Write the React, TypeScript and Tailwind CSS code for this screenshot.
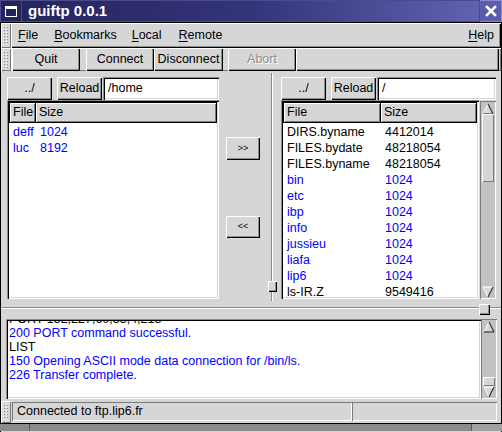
import React from "react";

const raised =
  "shadow-[inset_1px_1px_0_#ffffff,inset_-1px_-1px_0_#000000,inset_-2px_-2px_0_#8e8e8e]";
const raisedThin = "shadow-[inset_1px_1px_0_#ffffff,inset_-1px_-1px_0_#7a7a7a]";
const sunken =
  "shadow-[inset_1px_1px_0_#8e8e8e,inset_2px_2px_0_#000000,inset_-1px_-1px_0_#ffffff,inset_-2px_-2px_0_#d6d6d6]";
const sunkenThin = "shadow-[inset_1px_1px_0_#7a7a7a,inset_-1px_-1px_0_#ffffff]";

function Grip({ h }: { h: number }) {
  return (
    <div className={`w-[10px] shrink-0 ${raisedThin} flex items-stretch justify-center py-[3px]`} style={{ height: h }}>
      <svg width="6" height={h - 6}>
        <defs>
          <pattern id={`g${h}`} width="3" height="3" patternUnits="userSpaceOnUse">
            <rect x="0" y="0" width="1" height="1" fill="#ffffff" />
            <rect x="1" y="1" width="1" height="1" fill="#8a8a8a" />
          </pattern>
        </defs>
        <rect width="6" height={h - 6} fill={`url(#g${h})`} />
      </svg>
    </div>
  );
}

function Btn({ children, w, h, className = "" }: { children: React.ReactNode; w: number; h: number; className?: string }) {
  return (
    <div
      className={`flex items-center justify-center shrink-0 text-[12.5px] text-black ${raised} ${className}`}
      style={{ width: w, height: h }}
    >
      {children}
    </div>
  );
}

function Arrow({ up }: { up: boolean }) {
  return (
    <svg width="12" height="12" viewBox="0 0 12 12">
      {up ? (
        <>
          <polygon points="6,1 11,11 1,11" fill="#d6d6d6" />
          <line x1="6" y1="1" x2="1" y2="11" stroke="#ffffff" strokeWidth="1" />
          <line x1="6" y1="1" x2="11" y2="11" stroke="#3a3a3a" strokeWidth="1.2" />
          <line x1="1" y1="11" x2="11" y2="11" stroke="#3a3a3a" strokeWidth="1.2" />
        </>
      ) : (
        <>
          <polygon points="1,1 11,1 6,11" fill="#d6d6d6" />
          <line x1="1" y1="1" x2="11" y2="1" stroke="#ffffff" strokeWidth="1.2" />
          <line x1="1" y1="1" x2="6" y2="11" stroke="#ffffff" strokeWidth="1" />
          <line x1="11" y1="1" x2="6" y2="11" stroke="#3a3a3a" strokeWidth="1.2" />
        </>
      )}
    </svg>
  );
}

function ScrollBar({ h, thumbTop, thumbH }: { h: number; thumbTop: number; thumbH: number }) {
  return (
    <div className={`relative w-[16px] shrink-0 bg-[#c2c2c2] ${sunkenThin}`} style={{ height: h }}>
      <div className="absolute left-[2px] top-[1px] w-[12px] h-[13px] flex items-center justify-center">
        <Arrow up />
      </div>
      <div
        className={`absolute left-[2px] w-[12px] bg-[#d6d6d6] ${raisedThin}`}
        style={{ top: thumbTop, height: thumbH }}
      />
      <div className="absolute left-[2px] bottom-[1px] w-[12px] h-[13px] flex items-center justify-center">
        <Arrow up={false} />
      </div>
    </div>
  );
}

type Row = { a: string; b: string; blue: boolean };

function FileList({ rows, w, h, c1 }: { rows: Row[]; w: number; h: number; c1: number }) {
  return (
    <div className={`bg-white shrink-0 p-[2px] ${sunken} overflow-hidden`} style={{ width: w, height: h }}>
      <div className="flex h-[21px] bg-[#d6d6d6]">
        <div className={`border border-black flex items-center pl-[3px] text-[12.5px] text-black ${raisedThin}`} style={{ width: c1 }}>
          File
        </div>
        <div className={`flex-1 border border-l-0 border-black flex items-center pl-[3px] text-[12.5px] text-black ${raisedThin}`}>
          Size
        </div>
      </div>
      <div className="pt-[1px]">
        {rows.map((r) => (
          <div
            key={r.a}
            className={`flex h-[16px] items-center text-[12.5px] leading-[16px] ${r.blue ? "text-[#0000ff]" : "text-black"}`}
          >
            <div className="pl-[4px] whitespace-nowrap" style={{ width: c1 }}>
              {r.a}
            </div>
            <div className="pl-[4px] whitespace-nowrap">{r.b}</div>
          </div>
        ))}
      </div>
    </div>
  );
}

const leftRows: Row[] = [
  { a: "deff", b: "1024", blue: true },
  { a: "luc", b: "8192", blue: true },
];

const rightRows: Row[] = [
  { a: "DIRS.byname", b: "4412014", blue: false },
  { a: "FILES.bydate", b: "48218054", blue: false },
  { a: "FILES.byname", b: "48218054", blue: false },
  { a: "bin", b: "1024", blue: true },
  { a: "etc", b: "1024", blue: true },
  { a: "ibp", b: "1024", blue: true },
  { a: "info", b: "1024", blue: true },
  { a: "jussieu", b: "1024", blue: true },
  { a: "liafa", b: "1024", blue: true },
  { a: "lip6", b: "1024", blue: true },
  { a: "ls-IR.Z", b: "9549416", blue: false },
];

function MenuItem({ u, rest, className = "" }: { u: string; rest: string; className?: string }) {
  return (
    <span className={`text-[12.5px] text-black ${className}`}>
      <span className="underline underline-offset-2 decoration-1">{u}</span>
      {rest}
    </span>
  );
}

export default function App() {
  return (
    <div className="w-[502px] h-[432px] overflow-hidden bg-[#d6d6d6] font-['Liberation_Sans',Arial,sans-serif] flex flex-col">
      {/* title bar */}
      <div className="h-[22px] flex shrink-0 bg-gradient-to-r from-[#24245a] via-[#34347a] to-[#6666b6]">
        <div className="w-[22px] h-[22px] border border-[#4a4a8e] flex items-center justify-center">
          <svg width="12" height="11" viewBox="0 0 12 11">
            <rect x="0.5" y="0.5" width="11" height="10" fill="none" stroke="#ffffff" strokeWidth="1" />
            <rect x="0" y="0" width="12" height="3" fill="#ffffff" />
          </svg>
        </div>
        <div className="flex-1 h-[22px] border border-l-0 border-[#4a4a8e] flex items-center pl-[6px] text-white font-bold text-[15px]">
          guiftp 0.0.1
        </div>
        <div className="w-[22px] h-[22px] border border-l-0 border-[#8a8ad0] bg-[#5c5cac] flex items-center justify-center">
          <svg width="12" height="12" viewBox="0 0 12 12">
            <path d="M2 2 L10 10 M10 2 L2 10" stroke="#ffffff" strokeWidth="2.6" strokeLinecap="square" />
          </svg>
        </div>
      </div>

      {/* window body with frame */}
      <div className="flex-1 flex flex-col border-x border-t border-black min-h-0">
        {/* menubar */}
        <div className="h-[25px] flex shrink-0">
          <Grip h={25} />
          <div className={`flex-1 h-[25px] flex items-center ${raised} pl-[7px] pr-[7px]`}>
            <MenuItem u="F" rest="ile" />
            <MenuItem u="B" rest="ookmarks" className="ml-[16px]" />
            <MenuItem u="L" rest="ocal" className="ml-[15px]" />
            <MenuItem u="R" rest="emote" className="ml-[17px]" />
            <div className="flex-1" />
            <MenuItem u="H" rest="elp" />
          </div>
        </div>

        {/* toolbar */}
        <div className="h-[23px] flex shrink-0">
          <Grip h={23} />
          <div className={`flex-1 h-[23px] flex ${raisedThin}`}>
            <Btn w={68} h={23} className="ml-[1px]">Quit</Btn>
            <Btn w={68} h={23} className="ml-[6px]">Connect</Btn>
            <Btn w={69} h={23}>Disconnect</Btn>
            <Btn w={68} h={23} className="ml-[5px] !text-[#8e8e8e] [text-shadow:1px_1px_0_#ffffff]">Abort</Btn>
            <div className={`flex-1 h-[23px] ${raised} mr-[2px]`} />
          </div>
        </div>

        {/* top paned */}
        <div className="h-[231px] flex shrink-0">
          {/* left pane */}
          <div className="w-[267px] shrink-0 flex pl-[6px] pt-[6px]">
            <div className="flex flex-col">
              <div className="flex h-[23px] items-center">
                <Btn w={45} h={23}>../</Btn>
                <Btn w={45} h={23} className="ml-[5px]">Reload</Btn>
                <div className={`ml-[1px] w-[116px] h-[23px] bg-white ${sunken} flex items-center pl-[5px] text-[12.5px] text-black`}>
                  /home
                </div>
              </div>
              <FileList rows={leftRows} w={212} h={199} c1={27} />
            </div>
            <div className="ml-[7px] flex flex-col">
              <Btn w={34} h={23} className="mt-[60px] !text-[9px]">&gt;&gt;</Btn>
              <Btn w={34} h={22} className="mt-[56px] !text-[9px]">&lt;&lt;</Btn>
            </div>
          </div>
          {/* vertical separator */}
          <div className="relative w-[9px] shrink-0">
            <div className="absolute left-[3px] top-[2px] bottom-[1px] w-[2px] border-l border-[#8a8a8a] border-r border-r-white" />
            <div className={`absolute left-0 top-[210px] w-[9px] h-[11px] bg-[#d6d6d6] ${raised}`} />
          </div>
          {/* right pane */}
          <div className="flex-1 flex flex-col pl-[4px] pt-[6px]">
            <div className="flex h-[23px] items-center">
              <Btn w={45} h={23}>../</Btn>
              <Btn w={45} h={23} className="ml-[5px]">Reload</Btn>
              <div className={`ml-[1px] w-[119px] h-[23px] bg-white ${sunken} flex items-center pl-[5px] text-[12.5px] text-black`}>
                /
              </div>
            </div>
            <div className="flex gap-[1px] items-start">
              <FileList rows={rightRows} w={198} h={199} c1={98} />
              <div className="mt-[1px]">
                <ScrollBar h={198} thumbTop={13} thumbH={68} />
              </div>
            </div>
          </div>
        </div>

        {/* horizontal separator */}
        <div className="relative h-[16px] shrink-0">
          <div className="absolute left-0 right-0 top-[5px] h-[2px] border-t border-[#8a8a8a] border-b border-b-white" />
          <div className={`absolute left-[478px] top-[2px] w-[11px] h-[11px] bg-[#d6d6d6] ${raised}`} />
        </div>

        {/* log */}
        <div className="h-[82px] shrink-0 flex pl-[5px] pt-[1px]">
          <div className={`w-[475px] h-[80px] bg-white ${sunken} p-[2px] overflow-hidden`}>
            <div className="h-[76px] overflow-hidden pl-[1px] text-[12.5px] leading-[14px] text-[#0000ff]">
              <div className="h-[5px] overflow-hidden">
                <div className="-mt-[9px] whitespace-nowrap text-black">PORT 132,227,60,33,4,218</div>
              </div>
              <div className="whitespace-nowrap">200 PORT command successful.</div>
              <div className="whitespace-nowrap text-black">LIST</div>
              <div className="whitespace-nowrap">150 Opening ASCII mode data connection for /bin/ls.</div>
              <div className="whitespace-nowrap">226 Transfer complete.</div>
            </div>
          </div>
          <ScrollBar h={80} thumbTop={58} thumbH={9} />
        </div>

        {/* status bar */}
        <div className="h-[23px] flex shrink-0 items-center">
          <Grip h={22} />
          <div className={`ml-[1px] w-[340px] h-[19px] ${sunkenThin} flex items-center pl-[5px] text-[12.5px] text-black`}>
            Connected to ftp.lip6.fr
          </div>
          <div className={`w-[145px] h-[19px] ${sunkenThin}`} />
        </div>

        {/* bottom frame */}
        <div className="h-[8px] shrink-0 flex border-t border-black bg-[#8c8c8c] -mx-[1px]">
          <div className="w-[30px] border-r border-[#5a5a5a]" />
          <div className="flex-1 border-r border-[#5a5a5a]" />
          <div className="w-[30px] bg-[#a2a2a2]" />
        </div>
      </div>
    </div>
  );
}
